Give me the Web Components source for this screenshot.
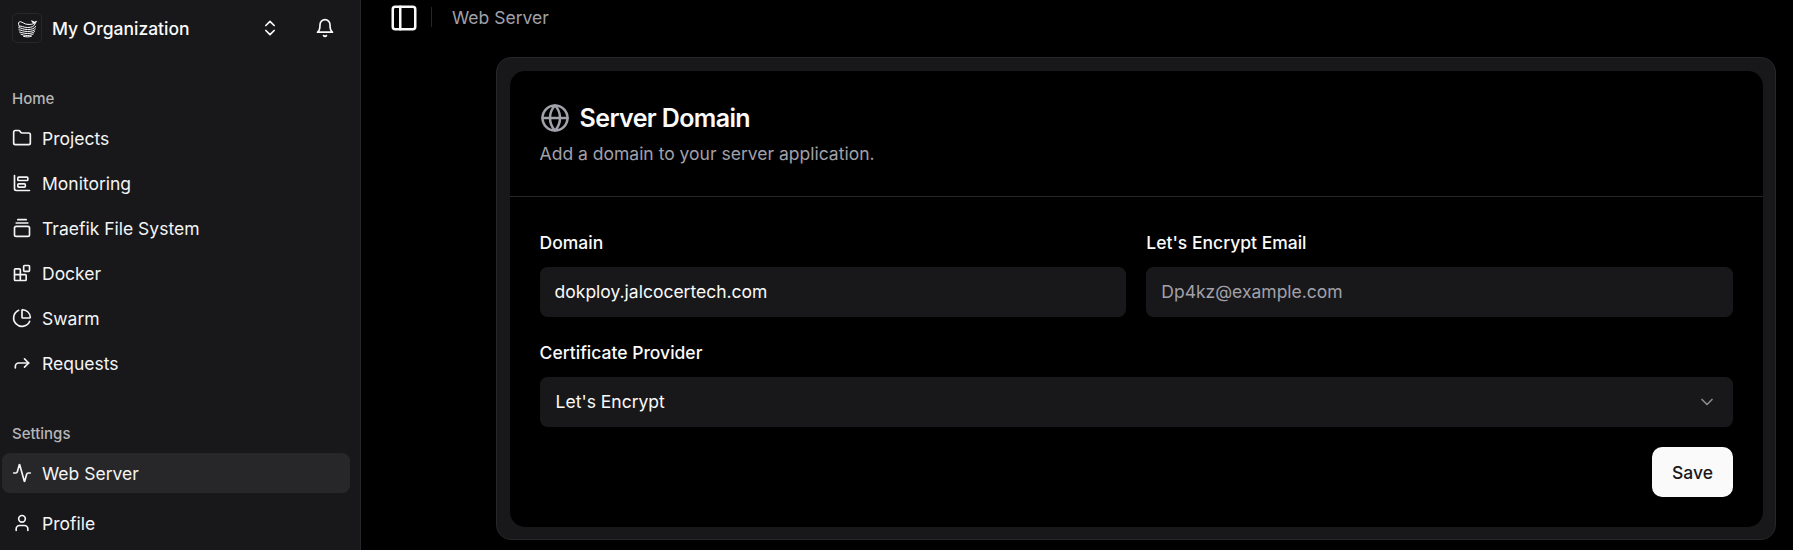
<!DOCTYPE html>
<html lang="en">
<head>
<meta charset="utf-8">
<title>Web Server</title>
<style>
  html, body { margin: 0; height: 100%; background: #000; }
  body { font: 400 17.5px/25px Inter, "Liberation Sans", sans-serif; color: #fafafa; overflow: hidden; }
</style>
</head>
<body>
<app-shell>
  <side-bar slot="sidebar">
    <org-switcher slot="header">My Organization</org-switcher>
    <nav-group label="Home">
      <nav-item icon="folder">Projects</nav-item>
      <nav-item icon="chart">Monitoring</nav-item>
      <nav-item icon="gallery">Traefik File System</nav-item>
      <nav-item icon="blocks">Docker</nav-item>
      <nav-item icon="pie">Swarm</nav-item>
      <nav-item icon="forward">Requests</nav-item>
    </nav-group>
    <nav-group label="Settings" style="--gap:10px">
      <nav-item icon="activity" active>Web Server</nav-item>
      <nav-item icon="user">Profile</nav-item>
    </nav-group>
  </side-bar>
  <top-bar>Web Server</top-bar>
  <settings-card>
    <card-title slot="header" icon="globe">Server Domain<span slot="description">Add a domain to your server application.</span></card-title>
    <form-field label="Domain"><text-input value="dokploy.jalcocertech.com"></text-input></form-field>
    <form-field label="Let's Encrypt Email"><text-input placeholder="Dp4kz@example.com"></text-input></form-field>
    <form-field label="Certificate Provider" wide><select-box>Let's Encrypt</select-box></form-field>
    <save-button slot="footer">Save</save-button>
  </settings-card>
</app-shell>

<script>
const ICONS = {
  folder: '<path d="M20 20a2 2 0 0 0 2-2V8a2 2 0 0 0-2-2h-7.9a2 2 0 0 1-1.69-.9L9.6 3.9A2 2 0 0 0 7.93 3H4a2 2 0 0 0-2 2v13a2 2 0 0 0 2 2Z"/>',
  chart: '<path d="M3 3v16a2 2 0 0 0 2 2h16"/><rect x="7" y="5" width="12" height="4" rx="1"/><rect x="7" y="13" width="9" height="4" rx="1"/>',
  gallery: '<path d="M7 2h10"/><path d="M5 6h14"/><rect width="18" height="12" x="3" y="10" rx="2"/>',
  blocks: '<rect width="7" height="7" x="14" y="3" rx="1"/><path d="M10 21V8a1 1 0 0 0-1-1H4a1 1 0 0 0-1 1v12a1 1 0 0 0 1 1h12a1 1 0 0 0 1-1v-5a1 1 0 0 0-1-1H3"/>',
  pie: '<path d="M21 12c.552 0 1.005-.449.95-.998a10 10 0 0 0-8.953-8.951c-.55-.055-.998.398-.998.95v8a1 1 0 0 0 1 1z"/><path d="M21.21 15.89A10 10 0 1 1 8 2.83"/>',
  forward: '<path d="m15 17 5-5-5-5"/><path d="M4 18v-2a4 4 0 0 1 4-4h12"/>',
  activity: '<path d="M22 12h-2.48a2 2 0 0 0-1.93 1.46l-2.35 8.36a.25.25 0 0 1-.48 0L9.24 2.18a.25.25 0 0 0-.48 0l-2.35 8.36A2 2 0 0 1 4.49 12H2"/>',
  user: '<path d="M19 21v-2a4 4 0 0 0-4-4H9a4 4 0 0 0-4 4v2"/><circle cx="12" cy="7" r="4"/>',
  updown: '<path d="m7 15 5 5 5-5"/><path d="m7 9 5-5 5 5"/>',
  bell: '<path d="M6 8a6 6 0 0 1 12 0c0 7 3 9 3 9H3s3-2 3-9"/><path d="M10.3 21a1.94 1.94 0 0 0 3.4 0"/>',
  panel: '<rect width="18" height="18" x="3" y="3" rx="2"/><path d="M9 3v18"/>',
  globe: '<circle cx="12" cy="12" r="10"/><path d="M12 2a14.5 14.5 0 0 0 0 20 14.5 14.5 0 0 0 0-20"/><path d="M2 12h20"/>',
  down: '<path d="m6 9 6 6 6-6"/>'
};
const icon = name => `<svg viewBox="0 0 24 24" fill="none" stroke="currentColor" stroke-width="2" stroke-linecap="round" stroke-linejoin="round">${ICONS[name]}</svg>`;

function define(name, css, html) {
  customElements.define(name, class extends HTMLElement {
    constructor() {
      super();
      this.attachShadow({ mode: 'open' });
    }
    connectedCallback() {
      this.shadowRoot.innerHTML =
        `<style>*{box-sizing:border-box}svg{display:block;flex:none}${css}</style>${html(this)}`;
    }
  });
}

define('app-shell', `
  :host{display:grid;grid-template-columns:361px 1fr;height:550px}
  main{display:flex;flex-direction:column;min-width:0}`,
  () => `<slot name="sidebar"></slot><main><slot></slot></main>`);

define('side-bar', `
  :host{display:flex;flex-direction:column;box-sizing:border-box;background:#18181b;border-right:1px solid #27272a;height:550px;overflow:hidden}
  header{padding:8px 10px 0 2px;height:78px}
  nav{display:flex;flex-direction:column;gap:30px;padding:0 10px 0 2px}`,
  () => `<header><slot name="header"></slot></header><nav><slot></slot></nav>`);

define('org-switcher', `
  :host{display:flex;align-items:center;height:40px;padding-left:10px;font-weight:500}
  .logo{width:30px;height:30px;border:1px solid #27272a;border-radius:5px;display:flex;align-items:center;justify-content:center;margin-right:10px}
  .logo svg{width:20px;height:20px;overflow:visible}
  .name{flex:1;white-space:nowrap}
  .sort svg{width:20px;height:20px}
  .bell{margin:0 15px 0 35px}
  .bell svg{width:20px;height:20px}`,
  () => `<span class="logo"><svg viewBox="0 0 20 20" fill="none" stroke="#fff" stroke-width="1" stroke-linecap="round">
      <path d="M2.200 8.200C.8 5.500 1.600 3.500 3.400 3.700c2.600.4 3.600 2.600 7.600 2.700 2.800.1 5.200-.1 6.400-1.300"/>
      <path fill="#fff" stroke-width=".6" d="M14.800 3c1 .1 1.900.4 2.600 1.100.7-.6 1.400-.9 2.300-.8-.3 1.100-1 1.700-2.100 2-1.400 0-2.400-.7-2.800-2.300z"/>
      <path d="M2.200 8.200C5 7.500 6 9.500 10.500 9.500c4 0 7-1 7.700-4"/>
      <path d="M1.700 9.700C4.500 9.700 6 11.500 10.400 11.500c4.300 0 7.300-.9 8.200-3"/>
      <path d="M2 11.800c2.600.2 4.100 1.700 8.400 1.700 4.200 0 6.900-.8 8-2.400"/>
      <path d="M2.600 14c2 .3 4 1.500 7.800 1.500 3.700 0 6-.7 7.200-1.900"/>
      <path d="M3.900 16.200c1.500.5 3.500 1.300 6.500 1.300 2.900 0 4.800-.6 6-1.500"/>
      <path d="M6.500 18.300c2.500.8 5.300.8 7.800 0"/>
    </svg></span><span class="name"><slot></slot></span><span class="sort">${icon('updown')}</span><span class="bell">${icon('bell')}</span>`);

define('nav-group', `
  :host{display:block}
  .label{height:40px;line-height:40px;padding:1px 0 0 10px;font-size:15px;font-weight:500;color:#b6b6b7}
  .items{display:flex;flex-direction:column;gap:var(--gap,5px)}`,
  el => `<div class="label">${el.getAttribute('label')}</div><div class="items"><slot></slot></div>`);

define('nav-item', `
  :host{display:flex;align-items:center;gap:10px;height:40px;padding-left:10px;box-sizing:border-box;border-radius:7.5px;color:#f4f4f5}
  :host([active]){background:#27272a}
  svg{width:20px;height:20px}`,
  el => `${icon(el.getAttribute('icon'))}<span><slot></slot></span>`);

define('top-bar', `
  :host{display:flex;align-items:center;height:36px;padding-left:28px;color:#a1a1aa}
  svg{width:30px;height:30px;color:#fafafa}
  i{width:1px;height:20px;background:#27272a;margin:0 20px 2px 12px}
  span{padding-bottom:2px}`,
  () => `${icon('panel')}<i></i><span><slot></slot></span>`);

define('settings-card', `
  :host{display:block;box-sizing:border-box;width:1280px;height:483px;margin:21px 0 0 135px;padding:13px 12px 12px 13px;background:#18181b;border:1px solid #27272a;border-radius:15px}
  section{background:#000;border-radius:15px;height:456px;display:flex;flex-direction:column}
  header{height:126px;padding:30px 29.6px;border-bottom:1px solid #27272a}
  .body{display:grid;grid-template-columns:1fr 1fr;gap:20px;padding:30px 30px 0 29.6px}
  footer{display:flex;justify-content:flex-end;padding:20px 30px 0}`,
  () => `<section><header><slot name="header"></slot></header><div class="body"><slot></slot></div><footer><slot name="footer"></slot></footer></section>`);

define('card-title', `
  :host{display:block}
  .row{display:flex;align-items:center;gap:10px;height:35px;font-size:25px;font-weight:600;letter-spacing:-.625px}
  svg{width:30px;height:30px;margin-bottom:1px;color:#a1a1aa}
  p{margin:5px 0 0;color:#a1a1aa}`,
  el => `<div class="row">${icon(el.getAttribute('icon'))}<span><slot></slot></span></div><p><slot name="description"></slot></p>`);

define('form-field', `
  :host{display:flex;flex-direction:column;gap:10px;min-width:0}
  :host([wide]){grid-column:1/-1}
  label{font-weight:500;line-height:30px;height:30px;padding-top:1px}`,
  el => `<label>${el.getAttribute('label')}</label><slot></slot>`);

define('text-input', `
  :host{display:block}
  input{display:block;width:100%;height:50px;padding:0 15px 2px;border:0;border-radius:7.5px;background:#18181b;color:#fafafa;font:inherit;outline:0}
  input::placeholder{color:#a1a1aa;opacity:1}`,
  el => `<input value="${el.getAttribute('value') || ''}" placeholder="${el.getAttribute('placeholder') || ''}">`);

define('select-box', `
  :host{display:flex;align-items:center;justify-content:space-between;box-sizing:border-box;height:50px;padding:0 16px;border-radius:7.5px;background:#18181b}
  span{padding-bottom:2px}
  svg{width:20px;height:20px;opacity:.5}`,
  () => `<span><slot></slot></span>${icon('down')}`);

define('save-button', `
  :host{display:block}
  button{display:block;width:81px;height:50px;border:0;border-radius:10px;background:#fafafa;color:#18181b;font:inherit;font-weight:500;padding:0}`,
  () => `<button><slot></slot></button>`);
</script>
</body>
</html>
